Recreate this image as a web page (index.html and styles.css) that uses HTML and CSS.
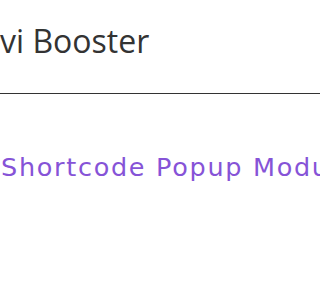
FILE: index.html
```html
<!DOCTYPE html>
<html>
<head>
<meta charset="utf-8">
<link rel="stylesheet" href="styles.css">
</head>
<body>
<header class="site-header">
  <h1 class="site-title">vi Booster</h1>
</header>
<main class="content">
  <h2 class="post-title">Shortcode Popup Module</h2>
</main>
</body>
</html>
```
FILE: styles.css
```css
html, body {
  margin: 0;
  padding: 0;
  background: #fff;
  overflow: hidden;
}
.site-header {
  height: 93px;
  border-bottom: 1px solid #333;
  display: flex;
  align-items: flex-start;
}
.site-title {
  margin: 19px 0 0 0;
  font-family: "Open Sans", sans-serif;
  font-weight: 400;
  font-size: 32px;
  line-height: 44px;
  color: #333;
  white-space: nowrap;
}
.content {
  padding-top: 56px;
}
.post-title {
  margin: 0;
  padding-left: 1px;
  font-family: "DejaVu Sans", sans-serif;
  font-weight: 400;
  font-size: 25.5px;
  line-height: 34px;
  letter-spacing: 1.7px;
  color: #8653d7;
  white-space: nowrap;
  overflow: hidden;
}
```
